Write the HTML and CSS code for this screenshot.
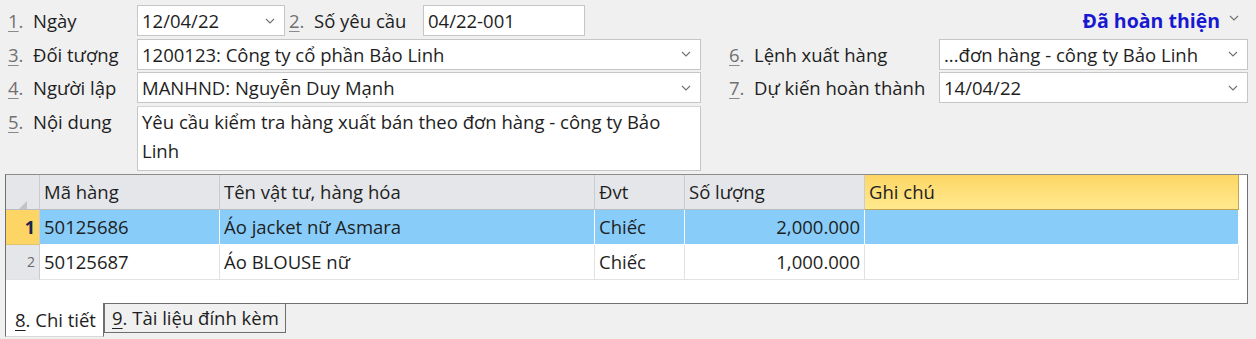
FILE: index.html
```html
<!DOCTYPE html>
<html lang="vi">
<head>
<meta charset="utf-8">
<link rel="stylesheet" href="styles.css">
</head>
<body>
<div class="top">
  <div class="lbl"><span class="num"><u>1</u>.</span>Ngày</div>
  <div class="row1">
    <div class="field date"><span class="val">12/04/22</span><svg class="chev" viewBox="0 0 10 6"><polyline points="1,1 5,5 9,1"/></svg></div>
    <div class="lbl lbl2"><span class="num"><u>2</u>.</span>Số yêu cầu</div>
    <div class="field code"><span class="val">04/22-001</span></div>
  </div>
  <div class="status"><span>Đã hoàn thiện</span><svg class="chev" viewBox="0 0 10 6"><polyline points="1,1 5,5 9,1"/></svg></div>

  <div class="lbl"><span class="num"><u>3</u>.</span>Đối tượng</div>
  <div class="field"><span class="val">1200123: Công ty cổ phần Bảo Linh</span><svg class="chev" viewBox="0 0 10 6"><polyline points="1,1 5,5 9,1"/></svg></div>
  <div class="spacer"></div>
  <div class="lbl"><span class="num"><u>6</u>.</span>Lệnh xuất hàng</div>
  <div class="field"><span class="val">...đơn hàng - công ty Bảo Linh</span><svg class="chev" viewBox="0 0 10 6"><polyline points="1,1 5,5 9,1"/></svg></div>

  <div class="lbl"><span class="num"><u>4</u>.</span>Người lập</div>
  <div class="field"><span class="val">MANHND: Nguyễn Duy Mạnh</span><svg class="chev" viewBox="0 0 10 6"><polyline points="1,1 5,5 9,1"/></svg></div>
  <div class="spacer"></div>
  <div class="lbl"><span class="num"><u>7</u>.</span>Dự kiến hoàn thành</div>
  <div class="field"><span class="val">14/04/22</span><svg class="chev" viewBox="0 0 10 6"><polyline points="1,1 5,5 9,1"/></svg></div>

  <div class="lbl lbl-top"><span class="num"><u>5</u>.</span>Nội dung</div>
  <div class="field area"><span class="val">Yêu cầu kiểm tra hàng xuất bán theo đơn hàng - công ty Bảo Linh</span></div>
</div>

<div class="grid">
  <div class="grow ghead">
    <div class="rh corner"><svg viewBox="0 0 8 8"><polygon points="8,0 8,8 0,8"/></svg></div>
    <div class="c">Mã hàng</div>
    <div class="c">Tên vật tư, hàng hóa</div>
    <div class="c">Đvt</div>
    <div class="c">Số lượng</div>
    <div class="c active">Ghi chú</div>
  </div>
  <div class="grow sel">
    <div class="rh cur">1</div>
    <div class="c">50125686</div>
    <div class="c">Áo jacket nữ Asmara</div>
    <div class="c">Chiếc</div>
    <div class="c num-r">2,000.000</div>
    <div class="c"></div>
  </div>
  <div class="grow">
    <div class="rh">2</div>
    <div class="c">50125687</div>
    <div class="c">Áo BLOUSE nữ</div>
    <div class="c">Chiếc</div>
    <div class="c num-r">1,000.000</div>
    <div class="c"></div>
  </div>
</div>

<div class="tabs">
  <div class="tab on"><u>8</u>. Chi tiết</div>
  <div class="tab"><u>9</u>. Tài liệu đính kèm</div>
</div>
</body>
</html>
```

FILE: styles.css
```css
* { box-sizing: border-box; }
html, body { margin: 0; padding: 0; }
body {
  width: 1256px;
  height: 339px;
  background: #f0f0f0;
  font-family: "Open Sans", "Noto Sans", sans-serif;
  font-size: 18.5px;
  color: #1e1e1e;
  overflow: hidden;
}
.top {
  display: grid;
  grid-template-columns: 129px 564px 28px 210px 309px;
  grid-template-rows: 31px 31px 31px 66px;
  row-gap: 2.5px;
  padding: 5px 0 0 8px;
}
.lbl {
  display: flex;
  align-items: center;
  white-space: nowrap;
  color: #1e1e1e;
}
.lbl-top { align-items: flex-start; padding-top: 3px; }
.num { color: #707070; width: 25px; flex: none; }
.num u { text-decoration-color: #8a8a8a; text-underline-offset: 3px; text-decoration-thickness: 1px; }
.row1 { display: flex; align-items: stretch; }
.field {
  background: #fff;
  border: 1px solid #c6c6c6;
  display: flex;
  align-items: center;
  padding: 0 9px 0 4px;
  white-space: nowrap;
  overflow: hidden;
}
.field .val { flex: 1; }
.chev { width: 10px; height: 6px; flex: none; }
.chev polyline { fill: none; stroke: #707070; stroke-width: 1.1; }
.date { width: 148px; }
.lbl2 { width: 138px; padding-left: 4px; }
.code { width: 162px; }
.status {
  grid-column: 3 / 6;
  display: flex;
  justify-content: flex-end;
  align-items: center;
  padding-right: 9px;
  gap: 9px;
  font-weight: 700;
  font-size: 19.5px;
  color: #1818d0;
}
.status .chev { margin-top: -5px; }
.area {
  height: 65px;
  align-items: flex-start;
  white-space: normal;
  padding: 0 30px 0 4px;
  line-height: 29px;
  border-top-color: #d4d4d4;
}
.grid {
  margin: 2px 0 0 5px;
  width: 1243px;
  height: 130px;
  border: 1px solid #707070;
  border-top-color: #8c8c8c;
  background: #fff;
}
.grow {
  display: grid;
  grid-template-columns: 34px 180px 375px 90px 180px 374px;
  height: 35px;
}
.grow .c, .grow .rh {
  display: flex;
  align-items: center;
  padding: 0 4px;
  border-right: 1px solid #e2e2e2;
  border-bottom: 1px solid #e2e2e2;
  white-space: nowrap;
}
.ghead .c, .ghead .rh {
  background: #e4e6ea;
  border-right-color: #c9ccd0;
  border-bottom-color: #b9bcc0;
}
.ghead .c.active {
  background: linear-gradient(#fdd665, #ffe98e);
  border-bottom-color: #c8a24c;
  border-right-color: #c8a24c;
}
.rh {
  background: #e4e6ea;
  justify-content: flex-end;
  font-size: 14px;
  color: #6a6a6a;
  border-right-color: #c9ccd0 !important;
}
.corner { justify-content: flex-start !important; padding-left: 13px !important; align-items: flex-end !important; padding-bottom: 12px; }
.corner svg { width: 8px; height: 8px; }
.corner polygon { fill: #c4c4c4; }
.sel .c { background: #88cdf9; border-right-color: #fff; border-bottom-color: #fff; }
.rh.cur { background: #fdd565; color: #1b2350; font-weight: 700; font-size: 18px; border-bottom-color: #e3c46a; }
.num-r { justify-content: flex-end; }
.tabs {
  display: flex;
  align-items: flex-start;
  margin: -1px 0 0 5px;
}
.tab {
  height: 30px;
  border: 1px solid #6e6e6e;
  padding: 0 6px 0 7px;
  display: flex;
  align-items: center;
  white-space: nowrap;
}
.tab.on {
  height: 34px;
  background: #fff;
  border-top: none;
  border-bottom-color: #d8d8d8;
  width: 99px;
  padding: 1px 0 0 9px;
  border-left-color: #707070;
}
.tab u { text-underline-offset: 3px; text-decoration-thickness: 1px; }
```
